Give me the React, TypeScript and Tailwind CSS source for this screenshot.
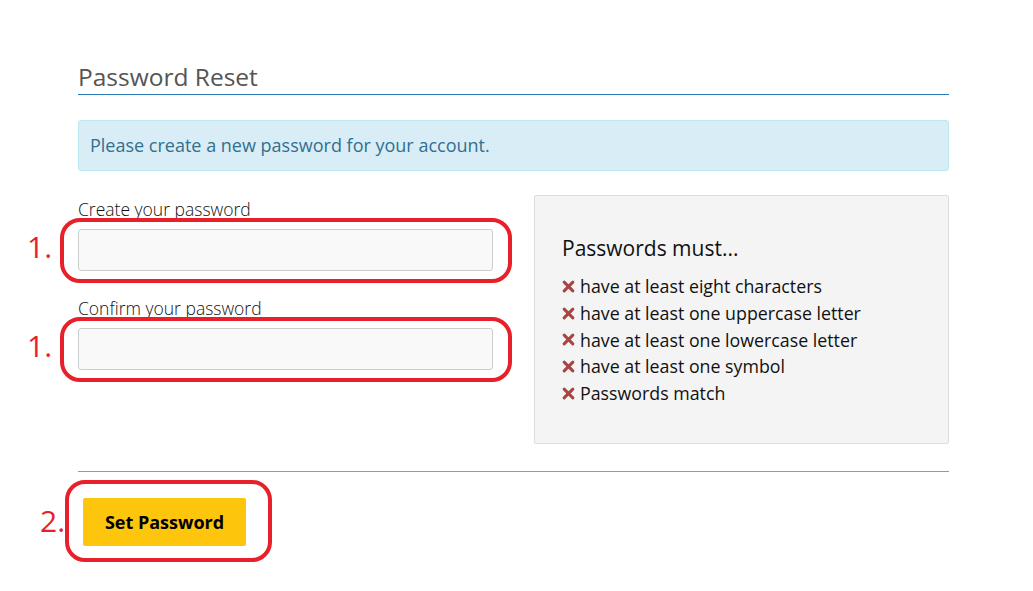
import React from 'react';

const rules = [
  'have at least eight characters',
  'have at least one uppercase letter',
  'have at least one lowercase letter',
  'have at least one symbol',
  'Passwords match',
];

const Marked: React.FC<{ n: string; children: React.ReactNode; box: string; num: string; className?: string }> = ({ n, children, box, num, className = '' }) => (
  <div className={`relative ${className}`}>
    {children}
    {/* annotation overlay */}
    <div className={`absolute border-[4px] border-[#e8202a] rounded-[20px] pointer-events-none ${box}`} />
    <span className={`absolute text-[#e8202a] text-[30px] leading-none ${num}`}>{n}</span>
  </div>
);

const App: React.FC = () => {
  return (
    <div className="w-[1033px] h-[591px] bg-white font-['Open_Sans',sans-serif] text-[#222]">
      <div className="ml-[78px] w-[871px] pt-[61px]">
        <h1 className="text-[24.5px] leading-[31px] text-[#555] pb-[2px] border-b border-[#2a7ab5]">Password Reset</h1>

        <div className="mt-[25px] h-[51px] flex items-center px-[11px] bg-[#d9edf7] border border-[#bce8f1] rounded-[3px] text-[#31708f] text-[18px]">
          Please create a new password for your account.
        </div>

        <div className="mt-[24px] grid grid-cols-2 gap-[41px]">
          <div className="flex flex-col">
            <label className="mt-[3px] text-[17.5px] font-light leading-[22px] text-[#111]">Create your password</label>
            <Marked n="1." className="mt-[9px]" box="-left-[18px] -right-[19px] -top-[11px] -bottom-[12px]" num="-left-[51px] top-[3px]">
              <input type="password" className="block w-full h-[42px] bg-[#f9f9f9] border border-[#ccc] rounded-[3px]" />
            </Marked>
            <label className="mt-[26px] text-[17.5px] font-light leading-[22px] text-[#111]">Confirm your password</label>
            <Marked n="1." className="mt-[9px]" box="-left-[18px] -right-[19px] -top-[11px] -bottom-[12px]" num="-left-[51px] top-[3px]">
              <input type="password" className="block w-full h-[42px] bg-[#f9f9f9] border border-[#ccc] rounded-[3px]" />
            </Marked>
          </div>

          <div className="h-[249px] bg-[#f4f4f4] border border-[#ddd] rounded-[2px] pl-[27px] pt-[37px]">
            <h2 className="text-[21px] leading-[30px] text-[#111]">Passwords must...</h2>
            <ul className="mt-[10px]">
              {rules.map((r) => (
                <li key={r} className="flex items-center gap-[5px] h-[26.8px] text-[17.8px] text-[#111]">
                  <svg width="13" height="13" viewBox="0 0 12 12" className="shrink-0">
                    <path d="M2 2 L10 10 M10 2 L2 10" stroke="#a94442" strokeWidth="2.8" strokeLinecap="round" />
                  </svg>
                  {r}
                </li>
              ))}
            </ul>
          </div>
        </div>

        <div className="mt-[27px] border-t border-[#999]" />

        <div className="mt-[26px] ml-[5px]">
          <Marked n="2." className="inline-block" box="-left-[18px] -right-[26px] -top-[18px] -bottom-[16px]" num="-left-[43px] top-[8px]">
            <button className="block w-[163px] h-[48px] bg-[#fdc50c] rounded-[2px] text-[18px] font-bold text-black">Set Password</button>
          </Marked>
        </div>
      </div>
    </div>
  );
};

export default App;
